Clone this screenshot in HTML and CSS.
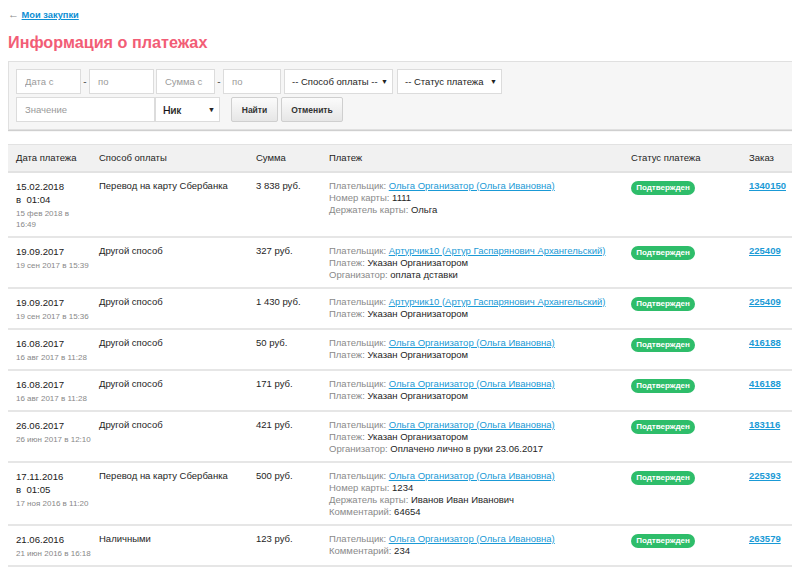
FILE: index.html
```html
<!DOCTYPE html>
<html lang="ru">
<head>
<meta charset="utf-8">
<title>Информация о платежах</title>
<link rel="stylesheet" href="styles.css">
</head>
<body>
<div class="back"><span class="arrow">&larr;</span> <a href="#" class="back-link">Мои закупки</a></div>
<h1 class="title">Информация о платежах</h1>

<div class="filter">
  <div class="frow">
    <input class="inp w65" placeholder="Дата с">
    <span class="dash">-</span>
    <input class="inp w65" placeholder="по">
    <input class="inp w59 ml2" placeholder="Сумма с">
    <span class="dash">-</span>
    <input class="inp w58" placeholder="по">
    <div class="sel w109 ml3"><span>-- Способ оплаты --</span><span class="caret">&#9660;</span></div>
    <div class="sel w105 ml4"><span>-- Статус платежа</span><span class="caret">&#9660;</span></div>
  </div>
  <div class="frow">
    <input class="inp w139" placeholder="Значение">
    <div class="sel w65 nik"><span>Ник</span><span class="caret">&#9660;</span></div>
    <button class="btn w47 ml11">Найти</button>
    <button class="btn w62 ml3">Отменить</button>
  </div>
</div>

<table class="tbl">
  <colgroup>
    <col class="c1"><col class="c2"><col class="c3"><col class="c4"><col class="c5"><col class="c6">
  </colgroup>
  <thead>
    <tr><th>Дата платежа</th><th>Способ оплаты</th><th>Сумма</th><th>Платеж</th><th>Статус платежа</th><th>Заказ</th></tr>
  </thead>
  <tbody>
    <tr>
      <td><div class="d">15.02.2018</div><div class="d">в&nbsp; 01:04</div><div class="sm">15 фев 2018 в<br>16:49</div></td>
      <td>Перевод на карту Сбербанка</td>
      <td>3 838 руб.</td>
      <td class="pay"><div><span class="lb">Плательщик:</span> <a href="#" class="nm">Ольга Организатор (Ольга Ивановна)</a></div><div><span class="lb">Номер карты:</span> 1111</div><div><span class="lb">Держатель карты:</span> Ольга</div></td>
      <td><span class="badge">Подтвержден</span></td>
      <td><a href="#" class="ord">1340150</a></td>
    </tr>
    <tr>
      <td><div class="d">19.09.2017</div><div class="sm">19 сен 2017 в 15:39</div></td>
      <td>Другой способ</td>
      <td>327 руб.</td>
      <td class="pay"><div><span class="lb">Плательщик:</span> <a href="#" class="nm">Артурчик10 (Артур Гаспарянович Архангельский)</a></div><div><span class="lb">Платеж:</span> Указан Организатором</div><div><span class="lb">Организатор:</span> оплата дставки</div></td>
      <td><span class="badge">Подтвержден</span></td>
      <td><a href="#" class="ord">225409</a></td>
    </tr>
    <tr>
      <td><div class="d">19.09.2017</div><div class="sm">19 сен 2017 в 15:36</div></td>
      <td>Другой способ</td>
      <td>1 430 руб.</td>
      <td class="pay"><div><span class="lb">Плательщик:</span> <a href="#" class="nm">Артурчик10 (Артур Гаспарянович Архангельский)</a></div><div><span class="lb">Платеж:</span> Указан Организатором</div></td>
      <td><span class="badge">Подтвержден</span></td>
      <td><a href="#" class="ord">225409</a></td>
    </tr>
    <tr>
      <td><div class="d">16.08.2017</div><div class="sm">16 авг 2017 в 11:28</div></td>
      <td>Другой способ</td>
      <td>50 руб.</td>
      <td class="pay"><div><span class="lb">Плательщик:</span> <a href="#" class="nm">Ольга Организатор (Ольга Ивановна)</a></div><div><span class="lb">Платеж:</span> Указан Организатором</div></td>
      <td><span class="badge">Подтвержден</span></td>
      <td><a href="#" class="ord">416188</a></td>
    </tr>
    <tr>
      <td><div class="d">16.08.2017</div><div class="sm">16 авг 2017 в 11:28</div></td>
      <td>Другой способ</td>
      <td>171 руб.</td>
      <td class="pay"><div><span class="lb">Плательщик:</span> <a href="#" class="nm">Ольга Организатор (Ольга Ивановна)</a></div><div><span class="lb">Платеж:</span> Указан Организатором</div></td>
      <td><span class="badge">Подтвержден</span></td>
      <td><a href="#" class="ord">416188</a></td>
    </tr>
    <tr>
      <td><div class="d">26.06.2017</div><div class="sm">26 июн 2017 в 12:10</div></td>
      <td>Другой способ</td>
      <td>421 руб.</td>
      <td class="pay"><div><span class="lb">Плательщик:</span> <a href="#" class="nm">Ольга Организатор (Ольга Ивановна)</a></div><div><span class="lb">Платеж:</span> Указан Организатором</div><div><span class="lb">Организатор:</span> Оплачено лично в руки 23.06.2017</div></td>
      <td><span class="badge">Подтвержден</span></td>
      <td><a href="#" class="ord">183116</a></td>
    </tr>
    <tr>
      <td><div class="d">17.11.2016</div><div class="d">в&nbsp; 01:05</div><div class="sm">17 ноя 2016 в 11:20</div></td>
      <td>Перевод на карту Сбербанка</td>
      <td>500 руб.</td>
      <td class="pay"><div><span class="lb">Плательщик:</span> <a href="#" class="nm">Ольга Организатор (Ольга Ивановна)</a></div><div><span class="lb">Номер карты:</span> 1234</div><div><span class="lb">Держатель карты:</span> Иванов Иван Иванович</div><div><span class="lb">Комментарий:</span> 64654</div></td>
      <td><span class="badge">Подтвержден</span></td>
      <td><a href="#" class="ord">225393</a></td>
    </tr>
    <tr>
      <td><div class="d">21.06.2016</div><div class="sm">21 июн 2016 в 16:18</div></td>
      <td>Наличными</td>
      <td>123 руб.</td>
      <td class="pay"><div><span class="lb">Плательщик:</span> <a href="#" class="nm">Ольга Организатор (Ольга Ивановна)</a></div><div><span class="lb">Комментарий:</span> 234</div></td>
      <td><span class="badge">Подтвержден</span></td>
      <td><a href="#" class="ord">263579</a></td>
    </tr>
  </tbody>
</table>
</body>
</html>
```

FILE: styles.css
```css
* { box-sizing: border-box; }
body {
  margin: 8px;
  font-family: "Liberation Sans", Arial, sans-serif;
  font-size: 9.5px;
  color: #1e1e1e;
  background: #fff;
}
.back {
  height: 12px;
  line-height: 12px;
  font-size: 9.3px;
}
.arrow { color: #888; font-size: 11px; }
.back-link {
  color: #0d8fd4;
  font-weight: bold;
  text-decoration: underline;
}
.title {
  margin: 11px 0 8px;
  font-size: 16.2px;
  line-height: 22px;
  font-weight: bold;
  color: #f25d76;
}
.filter {
  width: 785px;
  background: #f6f6f6;
  border: 1px solid #e0e0e0;
  box-shadow: 0 1px 1px #cfcfcf;
  padding: 7px 7px 7px;
  display: flex;
  flex-direction: column;
  gap: 3px;
}
.frow {
  display: flex;
  align-items: center;
  height: 25px;
}
.inp {
  height: 25px;
  border: 1px solid #dcdcdc;
  background: #fff;
  padding: 0 8px;
  font-family: inherit;
  font-size: 9.5px;
  color: #222;
  outline: none;
  margin: 0;
}
.inp::placeholder { color: #9a9a9a; }
.dash {
  width: 8px;
  text-align: center;
  color: #555;
  font-size: 10px;
}
.sel {
  height: 25px;
  border: 1px solid #dcdcdc;
  background: #fff;
  padding: 0 4px 0 7px;
  display: flex;
  align-items: center;
  justify-content: space-between;
  color: #1e1e1e;
  font-size: 9.5px;
}
.nik { font-size: 10.5px; color: #111; -webkit-text-stroke: 0.2px #111; }
.caret { font-size: 7px; color: #222; }
.btn {
  height: 25px;
  border: 1px solid #cfcfcf;
  border-radius: 2px;
  background: linear-gradient(#fbfbfb, #e6e6e6);
  font-family: inherit;
  font-size: 8.5px;
  font-weight: bold;
  color: #333;
  padding: 0;
}
.w65 { width: 65px; }
.w59 { width: 59px; }
.w58 { width: 58px; }
.w109 { width: 109px; }
.w105 { width: 105px; }
.w139 { width: 139px; }
.w47 { width: 47px; }
.w62 { width: 62px; }
.ml2 { margin-left: 2px; }
.ml3 { margin-left: 3px; }
.ml4 { margin-left: 4px; }
.ml11 { margin-left: 11px; }

.tbl {
  margin-top: 14px;
  width: 785px;
  table-layout: fixed;
  border-collapse: collapse;
}
.c1 { width: 83px; }
.c2 { width: 157px; }
.c3 { width: 73px; }
.c4 { width: 302px; }
.c5 { width: 118px; }
.c6 { width: 52px; }
.tbl th {
  background: #f1f1f1;
  border-top: 1px solid #e2e2e2;
  border-bottom: 2px solid #e2e2e2;
  text-align: left;
  font-weight: normal;
  color: #1e1e1e;
  padding: 6px 8px 6px;
  line-height: 13px;
  height: 27px;
}
.tbl td {
  vertical-align: top;
  padding: 7px 8px 6px;
  border-bottom: 2px solid #e6e6e6;
  line-height: 12px;
}
.d {
  line-height: 13px;
  font-size: 9.6px;
  color: #1a1a1a;
  white-space: nowrap;
}
.sm {
  margin-top: 2px;
  font-size: 8px;
  line-height: 11px;
  color: #888;
  white-space: nowrap;
}
.pay { color: #1e1e1e; }
.lb { color: #8a8a8a; }
.nm {
  color: #1a9ad6;
  text-decoration: underline;
}
.badge {
  display: inline-block;
  margin-top: 1px;
  width: 64px;
  height: 14px;
  line-height: 14px;
  border-radius: 7px;
  background: #2ebd6a;
  color: #fff;
  font-weight: bold;
  font-size: 8px;
  text-align: center;
}
.ord {
  color: #1a9ad6;
  font-weight: bold;
  text-decoration: underline;
}
```
